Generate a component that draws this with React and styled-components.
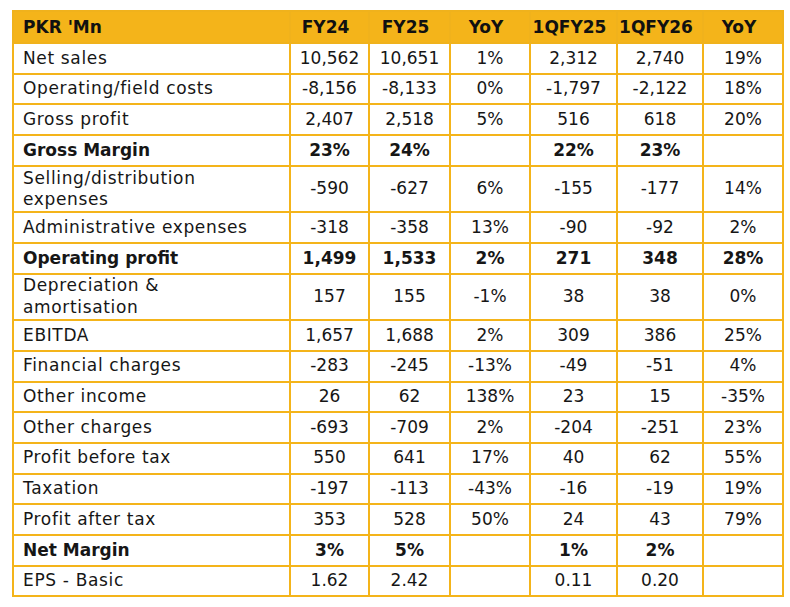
import React from "react";
import styled, { createGlobalStyle } from "styled-components";

const GlobalStyle = createGlobalStyle`
  body {
    margin: 0;
    background: #ffffff;
  }
`;

const rows = [
  { label: ["Net sales"], values: ["10,562", "10,651", "1%", "2,312", "2,740", "19%"] },
  { label: ["Operating/field costs"], values: ["-8,156", "-8,133", "0%", "-1,797", "-2,122", "18%"] },
  { label: ["Gross profit"], values: ["2,407", "2,518", "5%", "516", "618", "20%"] },
  { label: ["Gross Margin"], values: ["23%", "24%", "", "22%", "23%", ""], bold: true },
  { label: ["Selling/distribution", "expenses"], values: ["-590", "-627", "6%", "-155", "-177", "14%"] },
  { label: ["Administrative expenses"], values: ["-318", "-358", "13%", "-90", "-92", "2%"] },
  { label: ["Operating profit"], values: ["1,499", "1,533", "2%", "271", "348", "28%"], bold: true },
  { label: ["Depreciation &", "amortisation"], values: ["157", "155", "-1%", "38", "38", "0%"] },
  { label: ["EBITDA"], values: ["1,657", "1,688", "2%", "309", "386", "25%"] },
  { label: ["Financial charges"], values: ["-283", "-245", "-13%", "-49", "-51", "4%"] },
  { label: ["Other income"], values: ["26", "62", "138%", "23", "15", "-35%"] },
  { label: ["Other charges"], values: ["-693", "-709", "2%", "-204", "-251", "23%"] },
  { label: ["Profit before tax"], values: ["550", "641", "17%", "40", "62", "55%"] },
  { label: ["Taxation"], values: ["-197", "-113", "-43%", "-16", "-19", "19%"] },
  { label: ["Profit after tax"], values: ["353", "528", "50%", "24", "43", "79%"] },
  { label: ["Net Margin"], values: ["3%", "5%", "", "1%", "2%", ""], bold: true },
  { label: ["EPS - Basic"], values: ["1.62", "2.42", "", "0.11", "0.20", ""] },
];

const headers = ["FY24", "FY25", "YoY", "1QFY25", "1QFY26", "YoY"];
const widths = [277, 79, 81, 80, 87, 86, 80];

export default function App() {
  return (
    <Page>
      <GlobalStyle />
      <Table>
        <colgroup>
          {widths.map((w, i) => (
            <col key={i} style={{ width: w }} />
          ))}
        </colgroup>
        <thead>
          <HeadRow>
            <HeadCell $left>PKR 'Mn</HeadCell>
            {headers.map((h, i) => (
              <HeadCell key={i}>{h}</HeadCell>
            ))}
          </HeadRow>
        </thead>
        <tbody>
          {rows.map((r) => (
            <Row key={r.label.join(" ")} $tall={r.label.length > 1} $bold={r.bold}>
              <Label $bold={r.bold}>
                {r.label.map((line, i) => (
                  <LabelLine key={i}>{line}</LabelLine>
                ))}
              </Label>
              {r.values.map((v, i) => (
                <Value key={i}>{v}</Value>
              ))}
            </Row>
          ))}
        </tbody>
      </Table>
    </Page>
  );
}

const Page = styled.div`
  padding: 10px 8px 12px 12px;
  font-family: "DejaVu Sans", "Liberation Sans", sans-serif;
  color: #161616;
`;

const Table = styled.table`
  width: 770px;
  table-layout: fixed;
  border-collapse: collapse;
  border: 2px solid #f4b41a;
  font-size: 17px;
`;

const HeadRow = styled.tr`
  height: 32px;
  background: #f4b41a;
`;

const HeadCell = styled.th`
  border: 2px solid #f0b21c;
  padding: 0 8px 0 ${(p) => (p.$left ? "9px" : "0")};
  text-align: ${(p) => (p.$left ? "left" : "center")};
  font-weight: 700;
  font-size: 17px;
  color: #111;
  white-space: nowrap;
`;

const Row = styled.tr`
  height: ${(p) => (p.$tall ? "46.5px" : "30.7px")};
  font-weight: ${(p) => (p.$bold ? 700 : 400)};
`;

const Label = styled.td`
  border: 2px solid #f4b41a;
  padding: 0 8px 0 9px;
  line-height: 21.5px;
  text-align: left;
  letter-spacing: ${(p) => (p.$bold ? "0" : "0.65px")};
  white-space: nowrap;
`;

const LabelLine = styled.div`
  display: block;
`;

const Value = styled.td`
  border: 2px solid #f4b41a;
  padding: 0;
  line-height: 21.5px;
  text-align: center;
  white-space: nowrap;
`;
